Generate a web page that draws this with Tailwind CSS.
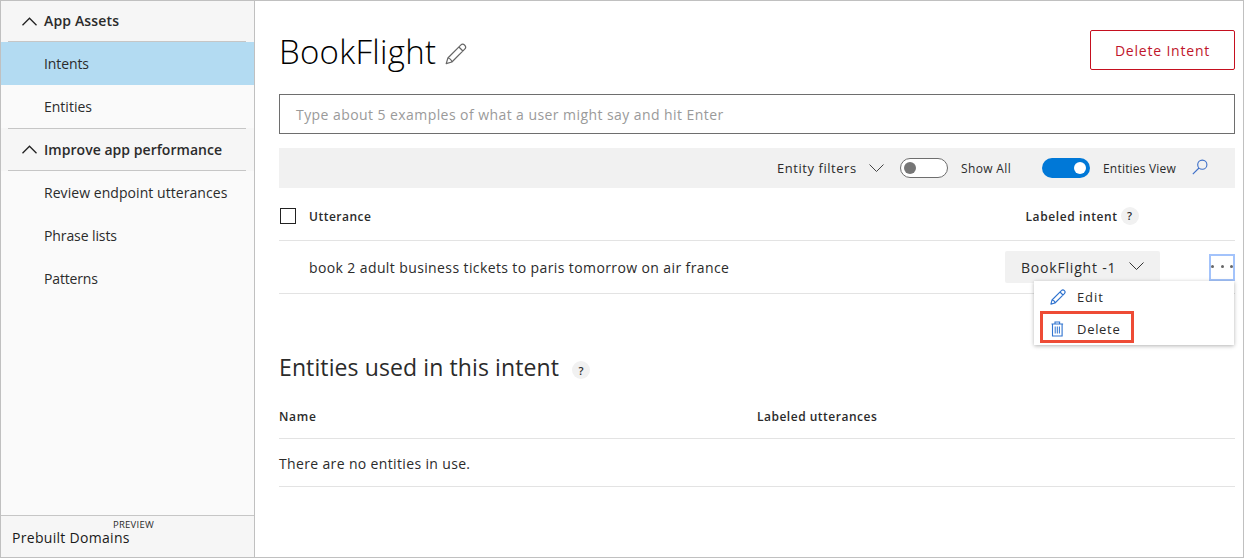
<!DOCTYPE html>
<html lang="en">
<head>
<meta charset="utf-8">
<title>BookFlight</title>
<script src="https://cdn.jsdelivr.net/npm/@tailwindcss/browser@4"></script>
</head>
<body class="h-[558px] w-[1244px] overflow-hidden bg-white font-['Open_Sans',sans-serif] text-sm text-[#2b2b2b]">
<div class="flex h-full w-full border border-[#c0c0c0] whitespace-nowrap">

  <!-- Sidebar -->
  <nav class="flex w-[254px] shrink-0 flex-col border-r border-[#c0c0c0] bg-[#fafafa]">
    <div class="h-[41px] bg-[#f6f6f6] pr-2 pl-[7px]">
      <div class="flex h-[41px] items-center border-b border-[#c6c6c6] pl-[14px] font-semibold tracking-[0.15px]">
        <svg class="mr-[7px] h-[9px] w-[15px]" viewBox="0 0 15 9" fill="none" stroke="#222" stroke-width="1.3"><path d="M.5 8.2 7.5 1.2l7 7"/></svg>App Assets
      </div>
    </div>
    <div class="flex h-[43px] items-center bg-[#b3dbf2] pl-[43px] tracking-[-0.1px]">Intents</div>
    <div class="flex h-[43px] items-center pl-[43px]">Entities</div>
    <div class="h-[43px] bg-[#f6f6f6] pr-2 pl-[7px]">
      <div class="flex h-[43px] items-center border-y border-[#c6c6c6] pl-[14px] font-semibold tracking-[0.04px]">
        <svg class="mr-[7px] h-[9px] w-[15px]" viewBox="0 0 15 9" fill="none" stroke="#222" stroke-width="1.3"><path d="M.5 8.2 7.5 1.2l7 7"/></svg>Improve app performance
      </div>
    </div>
    <div class="flex h-[43px] items-center pl-[43px] tracking-[0.06px]">Review endpoint utterances</div>
    <div class="flex h-[43px] items-center pl-[43px] tracking-[-0.1px]">Phrase lists</div>
    <div class="flex h-[43px] items-center pl-[43px] tracking-[-0.15px]">Patterns</div>
    <div class="mt-auto flex h-[42px] items-start border-t border-[#c6c6c6] bg-[#f6f6f6] pl-[11px]">
      <span class="mt-[12px] w-[118px] leading-5 font-medium tracking-[0.3px] text-[#1a1a1a]">Prebuilt Domains</span>
      <span class="mt-[3px] -ml-[17px] text-[9.5px] leading-[11px] tracking-[0.25px]">PREVIEW</span>
    </div>
  </nav>

  <!-- Intent page -->
  <main class="flex-1 pt-[29px] pr-2 pl-6">
    <div class="flex h-10 items-center">
      <h1 class="mt-[4px] text-[33px] leading-10 font-light tracking-[0.27px] text-black">BookFlight</h1>
      <svg class="mt-[8px] ml-[9px] h-[22px] w-[22px]" viewBox="0 0 22 22" fill="none" stroke="#666" stroke-width="1.2" stroke-linejoin="round"><path d="M1.2 20.6 2.9 15 15.7 2.2a2.8 2.8 0 0 1 4 4L6.9 19zM13.9 4l4 4M2.9 15c1.8.2 3.8 2.2 4 4"/></svg>
      <button class="ml-auto h-10 w-[145px] rounded-[2px] border border-[#c50f1f] pt-[2px] font-medium tracking-[0.8px] text-[#c0152b]">Delete Intent</button>
    </div>

    <div class="mt-6 flex h-10 items-center border border-[#6e6e6e] pt-[2px] pl-4 tracking-[0.43px] text-[#9a9a9a]">Type about 5 examples of what a user might say and hit Enter</div>

    <div class="mt-[14px] flex h-10 items-center bg-[#f1f1f1] pl-[498px] text-xs">
      <span class="w-[92px] pt-[2px] text-[13px] tracking-[0.55px]">Entity filters</span>
      <svg class="h-[8px] w-[15px]" viewBox="0 0 15 8" fill="none" stroke="#444"><path d="M.5.5l7 7 7-7"/></svg>
      <span class="ml-4 flex h-5 w-12 items-center rounded-full border border-[#6e6e6e] bg-white pl-[3px]"><i class="h-3 w-3 rounded-full bg-[#767676]"></i></span>
      <span class="ml-[13px] w-[81px] pt-[2px] tracking-[0.35px]">Show All</span>
      <span class="flex h-5 w-12 items-center justify-end rounded-full bg-[#0078d7] pr-1"><i class="h-3 w-3 rounded-full bg-white"></i></span>
      <span class="ml-[13px] w-[89px] pt-[2px] tracking-[0.2px]">Entities View</span>
      <svg class="-mt-[3px] h-4 w-4" viewBox="0 0 16 16" fill="none" stroke="#3d6fc8" stroke-width="1.1"><circle cx="10.3" cy="5.7" r="4.6"/><path d="M7 9 .8 15.2"/></svg>
    </div>

    <div class="flex h-[53px] items-center border-b border-[#e3e3e3] pt-[4px] text-xs font-semibold">
      <span class="ml-px h-4 w-4 border border-[#222]"></span>
      <span class="ml-[13px] w-[716.5px] pt-[2px] tracking-[0.5px]">Utterance</span>
      <span class="pt-[2px] tracking-[0.6px]">Labeled intent</span>
      <span class="ml-[3px] flex h-[18px] w-[18px] items-center justify-center rounded-full bg-[#f1f1f1] pt-px text-[11px]">?</span>
    </div>

    <div class="flex h-[53px] items-center border-b border-[#e3e3e3]">
      <span class="w-[726px] pt-[2px] pl-[30px] tracking-[0.39px]">book 2 adult business tickets to paris tomorrow on air france</span>
      <div class="flex h-8 w-[155px] items-center rounded-[2px] bg-[#f1f1f1] pl-4">
        <span class="w-[108px] pt-[2px] tracking-[0.8px]">BookFlight -1</span>
        <svg class="-mt-[2px] h-[8px] w-[15px]" viewBox="0 0 15 8" fill="none" stroke="#333"><path d="M.5.5l7 7 7-7"/></svg>
      </div>
      <div class="relative ml-auto flex h-[27px] w-[26px] items-center justify-between border-2 border-[#a3c3fb] pb-px">
        <i class="h-[3px] w-[3px] rounded-full bg-[#666]"></i><i class="h-[3px] w-[3px] rounded-full bg-[#666]"></i><i class="h-[3px] w-[3px] rounded-full bg-[#666]"></i>
        <!-- Row menu -->
        <div class="absolute -right-[1px] top-[25px] z-10 flex h-[64px] w-[200px] flex-col bg-white text-[13px] shadow-[0_1px_4px_rgba(0,0,0,0.3)]">
          <div class="flex h-8 items-center pl-4">
            <svg class="h-4 w-4" viewBox="0 0 16 16" fill="none" stroke="#2f73cf" stroke-width="1.1" stroke-linejoin="round"><path d="M.9 15.1 2 11 11.4 1.6a2 2 0 0 1 3 3L5 14zM10 3l3 3M2 11c1.4.2 2.8 1.6 3 3"/></svg>
            <span class="ml-[11px] pt-[2px] tracking-[0.9px]">Edit</span>
          </div>
          <div class="relative flex h-8 items-center pl-4">
            <svg class="h-4 w-4" viewBox="0 0 16 16" fill="none" stroke="#2f73cf" stroke-width="1.1"><path d="M1.5 3h11.6M5 3V1h4.6v2M2.5 3v12h9.6V3"/><path d="M5.2 5.500v7M7.3 5.500v7M9.4 5.500v7" stroke-width="1"/></svg>
            <span class="ml-[11px] pt-[2px] tracking-[0.7px]">Delete</span>
            <span class="absolute -top-[2px] left-[6px] h-8 w-[94px] border-[3px] border-[#ee4b35]"></span>
          </div>
        </div>
      </div>
    </div>

    <div class="mt-[53px] flex h-10 items-center">
      <h2 class="text-[23px] leading-10 tracking-[0.11px]">Entities used in this intent</h2>
      <span class="mt-[6px] ml-[13px] flex h-[18px] w-[18px] items-center justify-center rounded-full bg-[#f1f1f1] pt-px text-[11px] font-semibold">?</span>
    </div>

    <div class="mt-[7px] flex h-[45px] items-center border-b border-[#e3e3e3] pt-[2px] text-xs font-semibold">
      <span class="w-[478px] tracking-[0.7px]">Name</span>
      <span class="tracking-[0.5px]">Labeled utterances</span>
    </div>
    <div class="flex h-12 items-center border-b border-[#e3e3e3] pt-[3px] tracking-[0.35px]">There are no entities in use.</div>
  </main>
</div>
</body>
</html>
